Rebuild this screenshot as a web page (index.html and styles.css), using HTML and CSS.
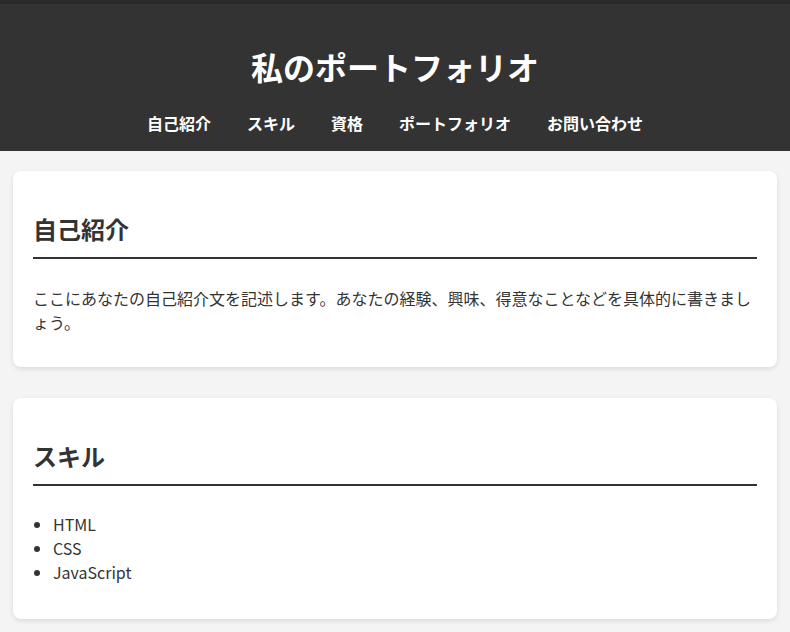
FILE: index.html
```html
<!DOCTYPE html>
<html lang="ja">
<head>
<meta charset="utf-8">
<title>私のポートフォリオ</title>
<link rel="stylesheet" href="styles.css">
</head>
<body>
<header class="site-header">
  <h1 class="site-title">私のポートフォリオ</h1>
  <nav class="site-nav">
    <a href="#about">自己紹介</a>
    <a href="#skills">スキル</a>
    <a href="#certs">資格</a>
    <a href="#works">ポートフォリオ</a>
    <a href="#contact">お問い合わせ</a>
  </nav>
</header>
<main class="content">
  <section class="card" id="about">
    <h2 class="card-title">自己紹介</h2>
    <p class="card-text">ここにあなたの自己紹介文を記述します。あなたの経験、興味、得意なことなどを具体的に書きましょう。</p>
  </section>
  <section class="card" id="skills">
    <h2 class="card-title">スキル</h2>
    <ul class="skill-list">
      <li>HTML</li>
      <li>CSS</li>
      <li>JavaScript</li>
    </ul>
  </section>
</main>
</body>
</html>
```
FILE: styles.css
```css
* { box-sizing: border-box; }
html, body { margin: 0; padding: 0; }
body {
  background: #f4f4f4;
  color: #333;
  font-family: "Noto Sans CJK JP", "Noto Sans", sans-serif;
  font-size: 16px;
  line-height: 24px;
}
.site-header {
  background: #333;
  border-top: 4px solid #2a2a2a;
  color: #fff;
  text-align: center;
  padding: 39px 0 16px;
}
.site-title {
  margin: 0;
  font-size: 32px;
  line-height: 46px;
  font-weight: 700;
}
.site-nav {
  margin-top: 22px;
  display: flex;
  justify-content: center;
  gap: 36px;
}
.site-nav a {
  color: #fff;
  text-decoration: none;
  font-weight: 700;
  font-size: 16px;
  line-height: 24px;
}
.content {
  padding: 20px 13px;
  display: flex;
  flex-direction: column;
  gap: 31px;
}
.card {
  background: #fff;
  border-radius: 8px;
  box-shadow: 0 2px 5px rgba(0,0,0,0.1);
  padding: 20px;
}
.card-title {
  margin: 20px 0 0;
  font-size: 24px;
  line-height: 36px;
  font-weight: 700;
  padding-bottom: 10px;
  border-bottom: 2px solid #333;
}
.card-text {
  margin: 27px 0 13px;
}
.skill-list {
  margin: 26px 0 15px;
  padding-left: 20px;
}
```
